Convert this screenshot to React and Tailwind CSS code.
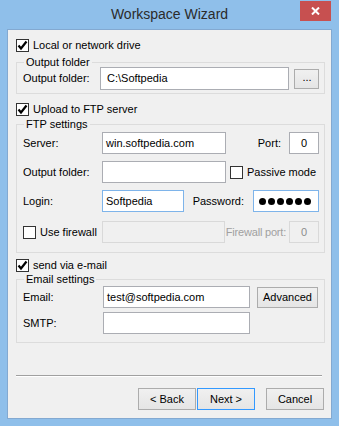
import React from "react";

// kleine Bausteine für den Dialog
const Check = ({ checked }) => (
  <div className="w-[13px] h-[13px] border border-[#333333] bg-white flex items-center justify-center shrink-0">
    {checked && (
      <svg width="11" height="11" viewBox="0 0 11 11">
        <path d="M1.5 5.5 L4 8.5 L9.5 1.5" fill="none" stroke="#000" strokeWidth="2.2" />
      </svg>
    )}
  </div>
);

const Input = ({ w, value, focus, disabled, center }) => (
  <div
    className={`h-[22px] border flex items-center px-[3px] shrink-0 whitespace-nowrap overflow-hidden ${
      disabled
        ? "border-[#d9d9d9] bg-[#f0f0f0] text-[#8c8c8c]"
        : focus
        ? "border-[#7eb4ea] bg-white"
        : "border-[#abadb3] bg-white"
    } ${center ? "justify-center" : ""}`}
    style={{ width: w }}
  >
    {value}
  </div>
);

const Btn = ({ w, children, primary, h = "h-[22px]" }) => (
  <div
    className={`${h} flex items-center justify-center border bg-gradient-to-b from-[#f0f0f0] to-[#e5e5e5] shrink-0 ${
      primary ? "border-[#3399ff]" : "border-[#acacac]"
    }`}
    style={{ width: w }}
  >
    {children}
  </div>
);

const Group = ({ title, className, children }) => (
  <div className={`relative border border-[#dcdcdc] ml-[8px] w-[309px] pl-[6px] pr-[5px] ${className}`}>
    <span className="absolute -top-[8px] left-[7px] px-[2px] bg-[#f0f0f0] leading-[14px]">{title}</span>
    {children}
  </div>
);

export default function App() {
  return (
    <div
      className="w-[339px] h-[426px] bg-[#8fbfea] px-[7px] text-[11px] text-black whitespace-nowrap"
      style={{ fontFamily: '"Liberation Sans", Arial, sans-serif' }}
    >
      {/* Titelleiste */}
      <div className="relative h-[29px] -mx-[7px] flex items-center justify-center">
        <span className="text-[14px] text-[#2b2b2b] -mt-[1px]">Workspace Wizard</span>
        <div className="absolute top-[1px] right-[8px] w-[31px] h-[20px] bg-[#c75050] flex items-center justify-center">
          <svg width="9" height="8" viewBox="0 0 9 8">
            <path d="M1 0.5 L8 7.5 M8 0.5 L1 7.5" stroke="#fff" strokeWidth="2" />
          </svg>
        </div>
      </div>

      {/* Client-Bereich */}
      <div className="w-[325px] h-[390px] border border-[#83a9d1] bg-[#f0f0f0] flex flex-col">
        <div className="mt-[8px] ml-[8px] h-[15px] flex items-center gap-[4px]">
          <Check checked />
          <span>Local or network drive</span>
        </div>

        <Group title="Output folder" className="mt-[9px] pt-[4px] pb-[3px]">
          <div className="h-[23px] flex items-center">
            <span className="w-[77px]">Output folder:</span>
            <div className="h-[23px] w-[189px] border border-[#abadb3] bg-white flex items-center pl-[6px]">
              C:\Softpedia
            </div>
            <div className="ml-[5px]">
              <Btn w="25px" h="h-[20px]">
                <span className="-mt-[2px] ml-[1px]">...</span>
              </Btn>
            </div>
          </div>
        </Group>

        <div className="mt-[8px] ml-[8px] h-[15px] flex items-center gap-[4px]">
          <Check checked />
          <span>Upload to FTP server</span>
        </div>

        <Group title="FTP settings" className="mt-[7px] pt-[7px] pb-[9px]">
          <div className="h-[22px] flex items-center">
            <span className="w-[79px]">Server:</span>
            <Input w="124px" value="win.softpedia.com" />
            <span className="ml-auto mr-[8px]">Port:</span>
            <Input w="30px" value="0" center />
          </div>
          <div className="mt-[7px] h-[22px] flex items-center">
            <span className="w-[79px]">Output folder:</span>
            <Input w="124px" value="" />
            <div className="ml-[4px] flex items-center gap-[4px]">
              <Check />
              <span>Passive mode</span>
            </div>
          </div>
          <div className="mt-[7px] h-[22px] flex items-center">
            <span className="w-[79px]">Login:</span>
            <Input w="82px" value="Softpedia" focus />
            <span className="ml-auto mr-[9px]">Password:</span>
            <div className="h-[22px] w-[66px] border border-[#7eb4ea] bg-white flex items-center pl-[5px] gap-[2px]">
              {[0, 1, 2, 3, 4, 5].map((i) => (
                <span key={i} className="w-[7px] h-[7px] rounded-full bg-black" />
              ))}
            </div>
          </div>
          <div className="mt-[9px] h-[22px] flex items-center">
            <div className="w-[79px] flex items-center gap-[4px]">
              <Check />
              <span>Use firewall</span>
            </div>
            <Input w="123px" value="" disabled />
            <span className="ml-auto mr-[3px] text-[#a0a0a0] tracking-[-0.2px]">Firewall port:</span>
            <Input w="30px" value="0" disabled center />
          </div>
        </Group>

        <div className="mt-[5px] ml-[8px] h-[15px] flex items-center gap-[4px]">
          <Check checked />
          <span>send via e-mail</span>
        </div>

        <Group title="Email settings" className="mt-[6px] pt-[6px] pb-[8px]">
          <div className="h-[22px] flex items-start">
            <span className="w-[80px] self-center">Email:</span>
            <Input w="147px" value="test@softpedia.com" />
            <div className="ml-[7px] mt-[1px]">
              <Btn w="61px" h="h-[21px]">Advanced</Btn>
            </div>
          </div>
          <div className="mt-[4px] h-[22px] flex items-center">
            <span className="w-[80px]">SMTP:</span>
            <Input w="147px" value="" />
          </div>
        </Group>

        <div className="mt-[32px] ml-[8px] w-[306px] h-[2px] border-t border-[#a0a0a0] border-b border-b-white" />

        <div className="mt-[11px] ml-[130px] flex">
          <Btn w="58px">&lt; Back</Btn>
          <div className="ml-[1px]">
            <Btn w="58px" primary>Next &gt;</Btn>
          </div>
          <div className="ml-[11px]">
            <Btn w="58px">Cancel</Btn>
          </div>
        </div>
      </div>
    </div>
  );
}
